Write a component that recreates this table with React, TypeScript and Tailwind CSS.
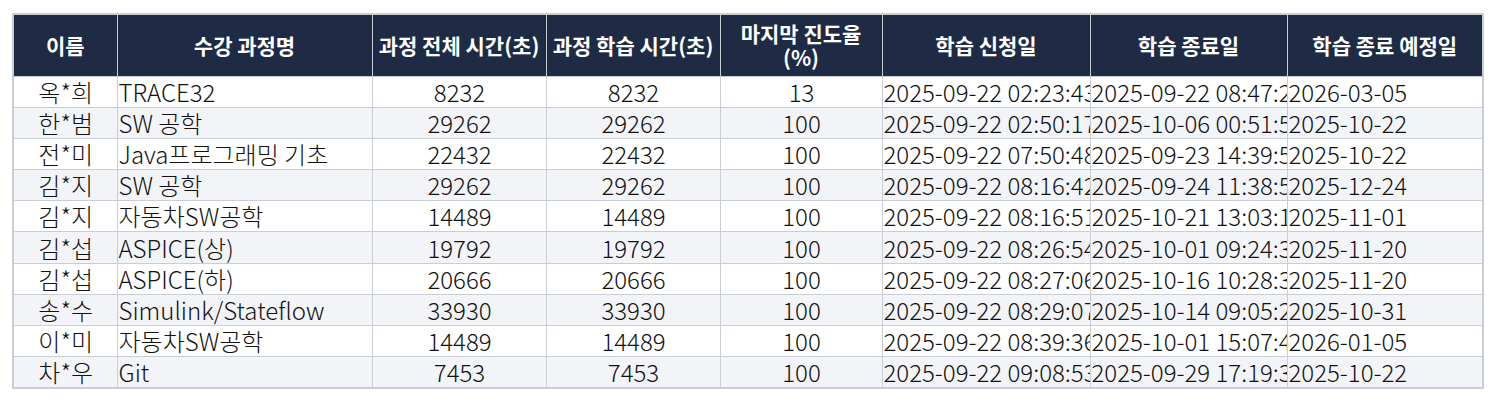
import React from "react";

type Row = {
  name: string;
  course: string;
  total: number;
  study: number;
  progress: number;
  applied: string;
  ended: string;
  due: string;
};

const rows: Row[] = [
  { name: "옥*희", course: "TRACE32", total: 8232, study: 8232, progress: 13, applied: "2025-09-22 02:23:43", ended: "2025-09-22 08:47:22", due: "2026-03-05" },
  { name: "한*범", course: "SW 공학", total: 29262, study: 29262, progress: 100, applied: "2025-09-22 02:50:17", ended: "2025-10-06 00:51:53", due: "2025-10-22" },
  { name: "전*미", course: "Java프로그래밍 기초", total: 22432, study: 22432, progress: 100, applied: "2025-09-22 07:50:48", ended: "2025-09-23 14:39:52", due: "2025-10-22" },
  { name: "김*지", course: "SW 공학", total: 29262, study: 29262, progress: 100, applied: "2025-09-22 08:16:42", ended: "2025-09-24 11:38:54", due: "2025-12-24" },
  { name: "김*지", course: "자동차SW공학", total: 14489, study: 14489, progress: 100, applied: "2025-09-22 08:16:51", ended: "2025-10-21 13:03:12", due: "2025-11-01" },
  { name: "김*섭", course: "ASPICE(상)", total: 19792, study: 19792, progress: 100, applied: "2025-09-22 08:26:54", ended: "2025-10-01 09:24:33", due: "2025-11-20" },
  { name: "김*섭", course: "ASPICE(하)", total: 20666, study: 20666, progress: 100, applied: "2025-09-22 08:27:06", ended: "2025-10-16 10:28:31", due: "2025-11-20" },
  { name: "송*수", course: "Simulink/Stateflow", total: 33930, study: 33930, progress: 100, applied: "2025-09-22 08:29:07", ended: "2025-10-14 09:05:22", due: "2025-10-31" },
  { name: "이*미", course: "자동차SW공학", total: 14489, study: 14489, progress: 100, applied: "2025-09-22 08:39:36", ended: "2025-10-01 15:07:41", due: "2026-01-05" },
  { name: "차*우", course: "Git", total: 7453, study: 7453, progress: 100, applied: "2025-09-22 09:08:53", ended: "2025-09-29 17:19:34", due: "2025-10-22" },
];

function App() {
  const th = "border border-[#c9cdd6] px-0 text-center font-bold align-middle text-[21px]";
  const td = "border border-[#c9cdd6] pl-[1px] pr-0 overflow-hidden whitespace-nowrap align-middle font-light";

  return (
    <div className="bg-white w-[1495px] h-[401px] pt-[13px] pl-[12px] font-['Noto_Sans_CJK_KR','Noto_Sans',sans-serif] text-[24px] text-[#111]">
      <table className="table-fixed border-collapse border-2 border-[#c9cdd6] w-[1470px]">
        <colgroup>
          <col className="w-[104px]" />
          <col className="w-[255px]" />
          <col className="w-[174px]" />
          <col className="w-[174px]" />
          <col className="w-[162px]" />
          <col className="w-[208px]" />
          <col className="w-[197px]" />
          <col className="w-[196px]" />
        </colgroup>
        <thead>
          <tr className="h-[62px] bg-[#1f2a45] text-white leading-[24px]">
            <th className={th}>이름</th>
            <th className={th}>수강 과정명</th>
            <th className={th + " whitespace-nowrap"}>과정 전체 시간(초)</th>
            <th className={th + " whitespace-nowrap"}>과정 학습 시간(초)</th>
            <th className={th}>마지막 진도율<br />(%)</th>
            <th className={th}>학습 신청일</th>
            <th className={th}>학습 종료일</th>
            <th className={th}>학습 종료 예정일</th>
          </tr>
        </thead>
        <tbody>
          {rows.map((r, i) => (
            <tr key={i} className={`h-[31.2px] leading-[26px] ${i % 2 === 1 ? "bg-[#f3f4f8]" : "bg-white"}`}>
              <td className={td + " text-center"}>{r.name}</td>
              <td className={td}>{r.course}</td>
              <td className={td + " text-center"}>{r.total}</td>
              <td className={td + " text-center"}>{r.study}</td>
              <td className={td + " text-center"}>{r.progress}</td>
              <td className={td}>{r.applied}</td>
              <td className={td}>{r.ended}</td>
              <td className={td}>{r.due}</td>
            </tr>
          ))}
        </tbody>
      </table>
    </div>
  );
}

export default App;
